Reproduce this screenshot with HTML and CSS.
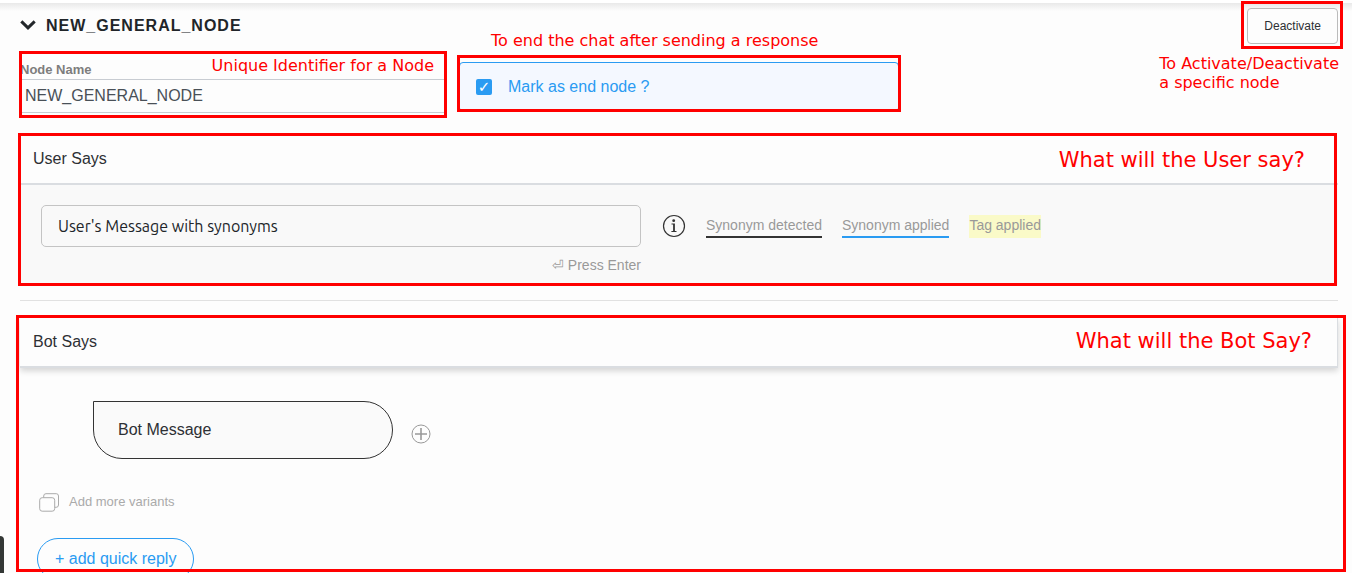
FILE: index.html
```html
<!DOCTYPE html>
<html lang="en">
<head>
<meta charset="utf-8">
<meta name="viewport" content="width=device-width, initial-scale=1">
<title>NEW_GENERAL_NODE</title>
<link rel="stylesheet" href="styles.css">
</head>
<body>
<main class="page">
  <header class="node-header">
    <svg class="chevron" viewBox="0 0 16 10" aria-hidden="true"><path d="M2.4 1.4L8 6.8l5.6-5.4"/></svg>
    <h1 class="node-title">NEW_GENERAL_NODE</h1>
    <div class="deactivate">
      <button class="deactivate-button" type="button">Deactivate</button>
      <span class="frame frame-deactivate"></span>
      <p class="note note-deactivate">To Activate/Deactivate<br>a specific node</p>
    </div>
  </header>

  <div class="settings">
    <div class="name-field">
      <label class="name-label" for="node-name">Node Name</label>
      <input class="name-input" id="node-name" type="text" value="NEW_GENERAL_NODE">
      <span class="frame frame-name"></span>
      <p class="note note-name">Unique Identifier for a Node</p>
    </div>
    <div class="end-field">
      <input class="end-check" id="end-node" type="checkbox" checked>
      <label class="end-label" for="end-node">Mark as end node ?</label>
      <span class="frame frame-end"></span>
      <p class="note note-end">To end the chat after sending a response</p>
    </div>
  </div>

  <section class="user-says">
    <h2 class="section-title">User Says</h2>
    <div class="user-body">
      <div class="message-column">
        <input class="message-input" type="text" aria-label="User message" value="User's Message with synonyms">
        <p class="enter-hint">⏎ Press Enter</p>
      </div>
      <div class="legend">
        <svg class="info" viewBox="0 0 24 24" aria-hidden="true"><circle class="line" cx="12" cy="12" r="10.5"/><circle cx="11.7" cy="6.7" r="1.4"/><path d="M9.5 9.6h3.4v7.3h1.6v1H9.4v-1h1.7v-6.3H9.5z"/></svg>
        <span class="tag tag-detected">Synonym detected</span>
        <span class="tag tag-synonym">Synonym applied</span>
        <span class="tag tag-marked">Tag applied</span>
      </div>
    </div>
    <span class="frame frame-user"></span>
    <p class="note note-large note-user">What will the User say?</p>
  </section>

  <hr class="divider">

  <section class="bot-says">
    <h2 class="section-title bot-title">Bot Says</h2>
    <div class="bot-body">
      <div class="bubble-row">
        <div class="bubble">Bot Message</div>
        <button class="icon-button" type="button" aria-label="Add message">
          <svg class="plus" viewBox="0 0 20 20" aria-hidden="true"><circle cx="10" cy="10" r="9"/><path class="cross" d="M10 4v12M4 10h12"/></svg>
        </button>
      </div>
      <button class="variants" type="button">
        <svg class="copies" viewBox="0 0 20 19" aria-hidden="true"><rect x="0.7" y="4.7" width="15" height="13.5" rx="2.5"/><path d="M4.7 4.5V3q0-2.3 2.3-2.3h10.3q2.2 0 2.2 2.3v9q0 2.3-2.3 2.3h-1.4"/></svg>
        Add more variants
      </button>
      <button class="quick-reply" type="button">+ add quick reply</button>
    </div>
    <span class="frame frame-bot"></span>
    <p class="note note-large note-bot">What will the Bot Say?</p>
  </section>
</main>
<div class="side-tab"></div>
</body>
</html>
```

FILE: styles.css
```css
* { box-sizing: border-box; }

body {
  margin: 0;
  background: #fdfdfd;
  color: #2d3034;
  font: 16px/20px "Liberation Sans", Arial, sans-serif;
}

h1, h2, p { margin: 0; }

button, input { font: inherit; color: inherit; }

.page {
  display: flex;
  flex-direction: column;
  height: 100vh;
  overflow: hidden;
  padding: 8px 14px 0 20px;
  background: linear-gradient(#fff 3px, #e9e9e9 3px, #fdfdfd 11px);
}

/* Red callouts laid over the form */
.frame {
  position: absolute;
  border: 3px solid #f00;
  pointer-events: none;
}

.note {
  position: absolute;
  color: #f00;
  font: 16px/19px "DejaVu Sans", sans-serif;
  white-space: nowrap;
}

.note-large { font-size: 21px; line-height: 26px; }

/* Header */
.node-header {
  display: flex;
  align-items: center;
}

.chevron {
  width: 16px;
  height: 10px;
  overflow: visible;
  fill: none;
  stroke: #23272b;
  stroke-width: 3;
  stroke-linecap: square;
}

.node-title {
  margin-left: 10px;
  color: #212529;
  font-size: 16px;
  line-height: 20px;
  letter-spacing: 1px;
}

.deactivate {
  position: relative;
  margin-left: auto;
}

.deactivate-button {
  display: block;
  height: 36px;
  padding: 0 16px;
  border: 1px solid #bbb;
  border-radius: 4px;
  background: #fdfdfd;
  font-size: 12px;
}

.frame-deactivate { inset: -7px -5px -5px -6px; }
.note-deactivate { top: 46px; right: -1px; }

/* Node settings */
.settings {
  display: grid;
  grid-template-columns: 425fr 440fr 425fr;
  align-items: start;
  gap: 14px;
  margin-top: 18px;
}

.name-field {
  position: relative;
  display: flex;
  flex-direction: column;
}

.name-label {
  padding-bottom: 2px;
  color: #7d7d7d;
  font-size: 13px;
  font-weight: bold;
  line-height: 15px;
}

.name-input {
  width: 100%;
  height: 34px;
  padding: 0 4px;
  border: 1px solid #c8ccd2;
  background: #fdfdfd;
  color: #495057;
}

.frame-name { inset: -11px -2px -5px -1px; }
.note-name { top: -6px; right: 11px; }

.end-field {
  position: relative;
  display: flex;
  align-items: center;
  gap: 16px;
  height: 50px;
  padding: 0 16px;
  border: 1px solid #2a9bf2;
  border-radius: 4px;
  background: #f4f8ff;
  color: #2a9bf2;
}

.end-check {
  display: grid;
  place-items: center;
  appearance: none;
  width: 16px;
  height: 16px;
  margin: 0;
  border-radius: 2px;
  background: #2a9bf2;
}

.end-check:checked::after {
  content: "✓";
  color: #fff;
  font: bold 15px/16px "DejaVu Sans", sans-serif;
}

.frame-end { inset: -8px -3px -1px -3px; }
.note-end { top: -32px; left: 31px; }

/* User says */
.section-title {
  padding: 0 13px;
  border-bottom: 2px solid #dadde1;
  background: #fdfdfd;
  font-size: 16px;
  font-weight: normal;
  line-height: 48px;
}

.user-says {
  position: relative;
  flex: none;
  margin-top: 22px;
}

.user-body {
  display: flex;
  gap: 21px;
  padding: 20px 21px 10px;
  background: #f9f9f9;
}

.message-column { width: 600px; }

.message-input {
  display: block;
  width: 100%;
  height: 42px;
  padding: 0 16px;
  border: 1px solid #c4c4c4;
  border-radius: 5px;
  background: #f9f9f9;
  color: #212529;
  font-family: Ubuntu, "Noto Sans", sans-serif;
}

.enter-hint {
  margin-top: 8px;
  color: #999;
  font-size: 14px;
  text-align: right;
}

.legend {
  display: flex;
  align-items: center;
  gap: 20px;
  height: 42px;
  color: #999;
  font-size: 14px;
}

.info {
  width: 24px;
  height: 24px;
  fill: #333;
}

.info .line {
  fill: none;
  stroke: #333;
  stroke-width: 1.2;
}

.tag { padding-bottom: 1px; border-bottom: 2px solid transparent; }
.tag-detected { border-color: #333; }
.tag-synonym { border-color: #2a9bf2; }
.tag-marked { border-color: #fafac8; background: #fafac8; }

.frame-user { inset: -2px 1px -1px -2px; }
.note-user { top: 12px; right: 33px; }

.divider {
  flex: none;
  width: 100%;
  margin: 15px 0 17px;
  border: 0;
  border-top: 1px solid #e1e1e1;
}

/* Bot says */
.bot-says {
  position: relative;
  flex: 1;
  min-height: 0;
}

.bot-title {
  border-right: 1px solid #dadde1;
  box-shadow: 0 3px 6px rgba(0, 0, 0, 0.16);
}

.bot-body {
  display: flex;
  flex-direction: column;
  align-items: flex-start;
  padding: 33px 17px 0;
}

.bubble-row {
  display: flex;
  align-items: center;
  gap: 18px;
  padding-left: 56px;
}

.bubble {
  width: 300px;
  padding: 0 24px;
  border: 1px solid #333;
  border-radius: 0 30px 30px 30px;
  background: #fafafa;
  line-height: 56px;
}

.icon-button {
  padding: 8px 0 0;
  border: 0;
  background: none;
}

.plus {
  display: block;
  width: 20px;
  height: 20px;
  fill: none;
  stroke: #999;
}

.cross { stroke-width: 1.6; }

.variants {
  display: flex;
  align-items: center;
  gap: 10px;
  margin-top: 33px;
  padding: 0 2px;
  border: 0;
  background: none;
  color: #aaa;
  font-size: 13px;
  line-height: 20px;
}

.copies {
  width: 20px;
  height: 19px;
  fill: none;
  stroke: #aaa;
}

.quick-reply {
  height: 42px;
  margin-top: 26px;
  padding: 0 17px;
  border: 1px solid #2a9bf2;
  border-radius: 21px;
  background: #fdfdfd;
  color: #2a9bf2;
}

.frame-bot { inset: -3px -8px 1px -4px; }
.note-bot { top: 10px; right: 26px; }

.side-tab {
  position: fixed;
  bottom: 0;
  left: 0;
  width: 4px;
  height: 37px;
  border-radius: 0 4px 0 0;
  background: #343836;
}
```
